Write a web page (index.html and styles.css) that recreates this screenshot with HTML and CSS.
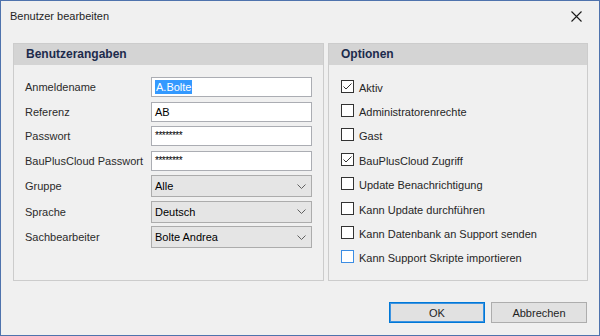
FILE: index.html
```html
<!DOCTYPE html>
<html lang="de">
<head>
  <meta charset="UTF-8" />
  <meta name="viewport" content="width=device-width, initial-scale=1" />
  <title>Benutzer bearbeiten</title>
  <link rel="stylesheet" href="styles.css">
</head>
<body>
  <div class="dialog">
    <!-- Title bar -->
    <div class="titlebar">
      <span class="title">Benutzer bearbeiten</span>
      <svg class="close" width="11" height="11" viewBox="0 0 11 11">
        <path d="M0.5 0.5 L10.5 10.5 M10.5 0.5 L0.5 10.5" stroke="#1a1a1a" stroke-width="1.1" fill="none" />
      </svg>
    </div>

    <div class="groups">
      <!-- Benutzerangaben -->
      <section class="group group-user">
        <h2>Benutzerangaben</h2>
        <div class="fields">
          <div class="field">
            <label>Anmeldename</label>
            <div class="textbox"><span class="selected">A.Bolte</span></div>
          </div>
          <div class="field">
            <label>Referenz</label>
            <div class="textbox">AB</div>
          </div>
          <div class="field">
            <label>Passwort</label>
            <div class="textbox password">********</div>
          </div>
          <div class="field">
            <label>BauPlusCloud Passwort</label>
            <div class="textbox password">********</div>
          </div>
          <div class="field field-select">
            <label>Gruppe</label>
            <div class="combo">Alle<svg class="chevron" width="9" height="5" viewBox="0 0 9 5"><path d="M0.5 0.5 L4.5 4.5 L8.5 0.5" stroke="#606060" fill="none" /></svg></div>
          </div>
          <div class="field field-select">
            <label>Sprache</label>
            <div class="combo">Deutsch<svg class="chevron" width="9" height="5" viewBox="0 0 9 5"><path d="M0.5 0.5 L4.5 4.5 L8.5 0.5" stroke="#606060" fill="none" /></svg></div>
          </div>
          <div class="field field-select">
            <label>Sachbearbeiter</label>
            <div class="combo">Bolte Andrea<svg class="chevron" width="9" height="5" viewBox="0 0 9 5"><path d="M0.5 0.5 L4.5 4.5 L8.5 0.5" stroke="#606060" fill="none" /></svg></div>
          </div>
        </div>
      </section>

      <!-- Optionen -->
      <section class="group group-options">
        <h2>Optionen</h2>
        <ul class="options">
          <li><span class="check checked"></span><span class="opt-label">Aktiv</span></li>
          <li><span class="check"></span><span class="opt-label">Administratorenrechte</span></li>
          <li><span class="check"></span><span class="opt-label">Gast</span></li>
          <li><span class="check checked"></span><span class="opt-label">BauPlusCloud Zugriff</span></li>
          <li><span class="check"></span><span class="opt-label">Update Benachrichtigung</span></li>
          <li><span class="check"></span><span class="opt-label">Kann Update durchführen</span></li>
          <li><span class="check"></span><span class="opt-label">Kann Datenbank an Support senden</span></li>
          <li><span class="check hover"></span><span class="opt-label">Kann Support Skripte importieren</span></li>
        </ul>
      </section>
    </div>

    <div class="buttons">
      <button class="btn btn-default">OK</button>
      <button class="btn">Abbrechen</button>
    </div>
  </div>
</body>
</html>
```

FILE: styles.css
```css
body {
  margin: 0;
  padding: 0;
  font-family: "Liberation Sans", Arial, sans-serif;
  font-size: 11px;
  color: #262626;
}

.dialog {
  width: 600px;
  height: 336px;
  box-sizing: border-box;
  border: 1px solid #4f73ad;
  background-color: #f0f0f0;
  display: flex;
  flex-direction: column;
}

.titlebar {
  height: 30px;
  display: flex;
  align-items: center;
  justify-content: space-between;
  padding: 0 17px 0 9px;
}

.title {
  font-size: 11px;
  color: #1f1f1f;
}

.close {
  display: block;
  margin-top: 1px;
}

.groups {
  display: flex;
  gap: 4px;
  margin: 12px 11px 0 12px;
  height: 238px;
}

.group {
  box-sizing: border-box;
  border: 1px solid #cccccc;
  height: 100%;
}

.group-user {
  width: 311px;
}

.group-options {
  width: 260px;
}

.group h2 {
  margin: 0;
  height: 21px;
  line-height: 21px;
  padding-left: 12px;
  background-color: #d4d4d4;
  font-size: 12px;
  font-weight: bold;
  color: #1d2b4c;
}

.fields {
  padding: 12px 10px 0 11px;
}

.field {
  display: flex;
  align-items: center;
  height: 20px;
  margin-bottom: 4.7px;
}

.field:nth-child(4) {
  margin-bottom: 4px;
}

.field-select {
  height: 22px;
  margin-bottom: 3.5px;
}

.field label {
  width: 126px;
  color: #2b2b2b;
}

.textbox, .combo {
  box-sizing: border-box;
  width: 161px;
  height: 100%;
  display: flex;
  align-items: center;
  padding-left: 3px;
  color: #000;
}

.textbox {
  background: #fff;
  border: 1px solid #abadb3;
}

.textbox.password {
  align-items: flex-start;
  padding-top: 3px;
  font-size: 10px;
  letter-spacing: -0.5px;
}

.selected {
  background-color: #3399ff;
  color: #fff;
  padding: 1px 1px;
}

.combo {
  background: #e5e5e5;
  border: 1px solid #acacac;
  justify-content: space-between;
  padding-right: 5px;
}

.chevron {
  display: block;
}

.options {
  list-style: none;
  margin: 0;
  padding: 9px 0 0 12px;
}

.options li {
  display: flex;
  align-items: center;
  height: 24.4px;
}

.check {
  box-sizing: border-box;
  width: 13px;
  height: 13px;
  border: 1px solid #333;
  background: #fff;
  margin-right: 5px;
  flex: none;
}

.check.checked {
  background: #fff url("data:image/svg+xml;utf8,<svg xmlns='http://www.w3.org/2000/svg' width='11' height='11' viewBox='0 0 11 11'><path d='M1.5 5.5 L4 8 L9.5 2.5' stroke='%23333' stroke-width='1' fill='none'/></svg>") no-repeat center;
}

.check.hover {
  border-color: #3c8de3;
}

.opt-label {
  margin-top: 3px;
  color: #262626;
}

.buttons {
  display: flex;
  justify-content: flex-end;
  gap: 6px;
  margin: 21px 12px 0 0;
}

.btn {
  box-sizing: border-box;
  width: 96px;
  height: 21px;
  font-family: "Liberation Sans", Arial, sans-serif;
  font-size: 11px;
  color: #1f1f1f;
  background-color: #e1e1e1;
  border: 1px solid #adadad;
  padding: 0;
}

.btn-default {
  border: 1px solid #0078d7;
  box-shadow: inset 0 0 0 1px #3d93e0;
}
```
